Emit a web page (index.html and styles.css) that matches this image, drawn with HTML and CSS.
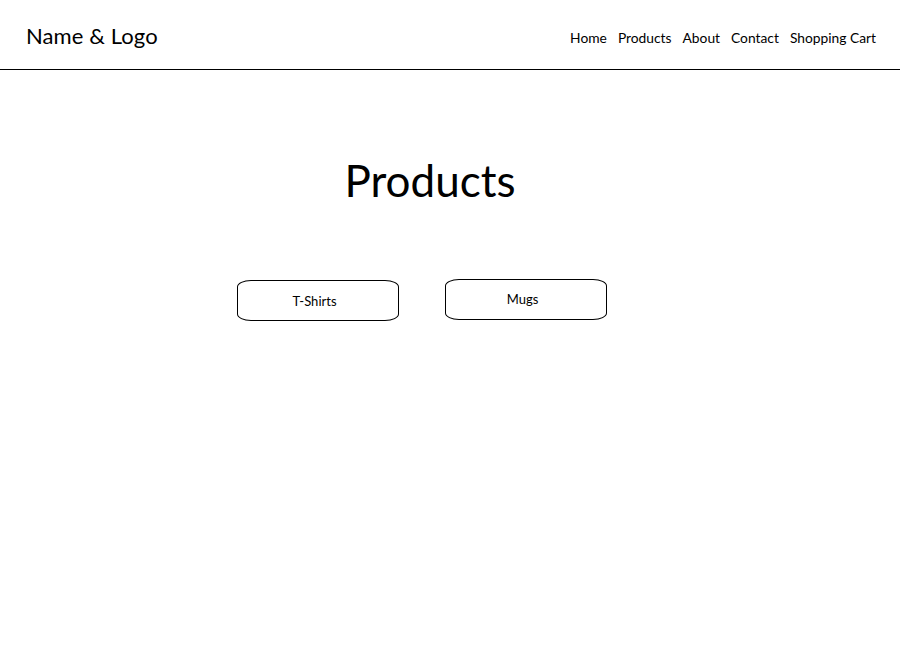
FILE: index.html
```html
<!DOCTYPE html>
<html>
<head>
<meta charset="utf-8">
<link rel="stylesheet" href="styles.css">
</head>
<body>
<header class="header">
  <div class="brand">Name &amp; Logo</div>
  <nav class="nav">
    <a class="nav-link">Home</a>
    <a class="nav-link">Products</a>
    <a class="nav-link">About</a>
    <a class="nav-link">Contact</a>
    <a class="nav-link">Shopping Cart</a>
  </nav>
</header>
<main class="main">
  <h1 class="title">Products</h1>
  <div class="cats">
    <div class="cat cat-a">T-Shirts</div>
    <div class="cat cat-b">Mugs</div>
  </div>
</main>
</body>
</html>
```
FILE: styles.css
```css
* { box-sizing: border-box; }
html, body { margin: 0; padding: 0; background: #fff; }
body {
  font-family: Lato, "Open Sans", sans-serif;
  color: #000;
  width: 900px;
  height: 657px;
  overflow: hidden;
}
.header {
  height: 70px;
  border-bottom: 1px solid #000;
  display: flex;
  align-items: center;
  justify-content: space-between;
  padding: 0 24px 0 26px;
}
.brand {
  font-size: 22px;
  letter-spacing: 0.1px;
  margin-top: 2px;
}
.nav {
  display: flex;
  gap: 11px;
  font-size: 13.8px;
  margin-top: 6px;
}
.nav-link { color: #000; text-decoration: none; }
.main {
  display: flex;
  flex-direction: column;
  align-items: center;
}
.title {
  font-weight: normal;
  font-size: 44px;
  margin: 88px 40px 0 0;
  line-height: 44px;
}
.cats {
  display: flex;
  gap: 46px;
  margin-top: 77px;
  margin-right: 56px;
}
.cat {
  width: 162px;
  height: 41px;
  border: 1px solid #000;
  border-radius: 14px / 7px;
  display: flex;
  align-items: center;
  justify-content: center;
  font-size: 13px;
  padding-right: 7px;
}
.cat-a { margin-top: 1px; }
.cat-b { margin-top: 0; padding-bottom: 2px; }
```
